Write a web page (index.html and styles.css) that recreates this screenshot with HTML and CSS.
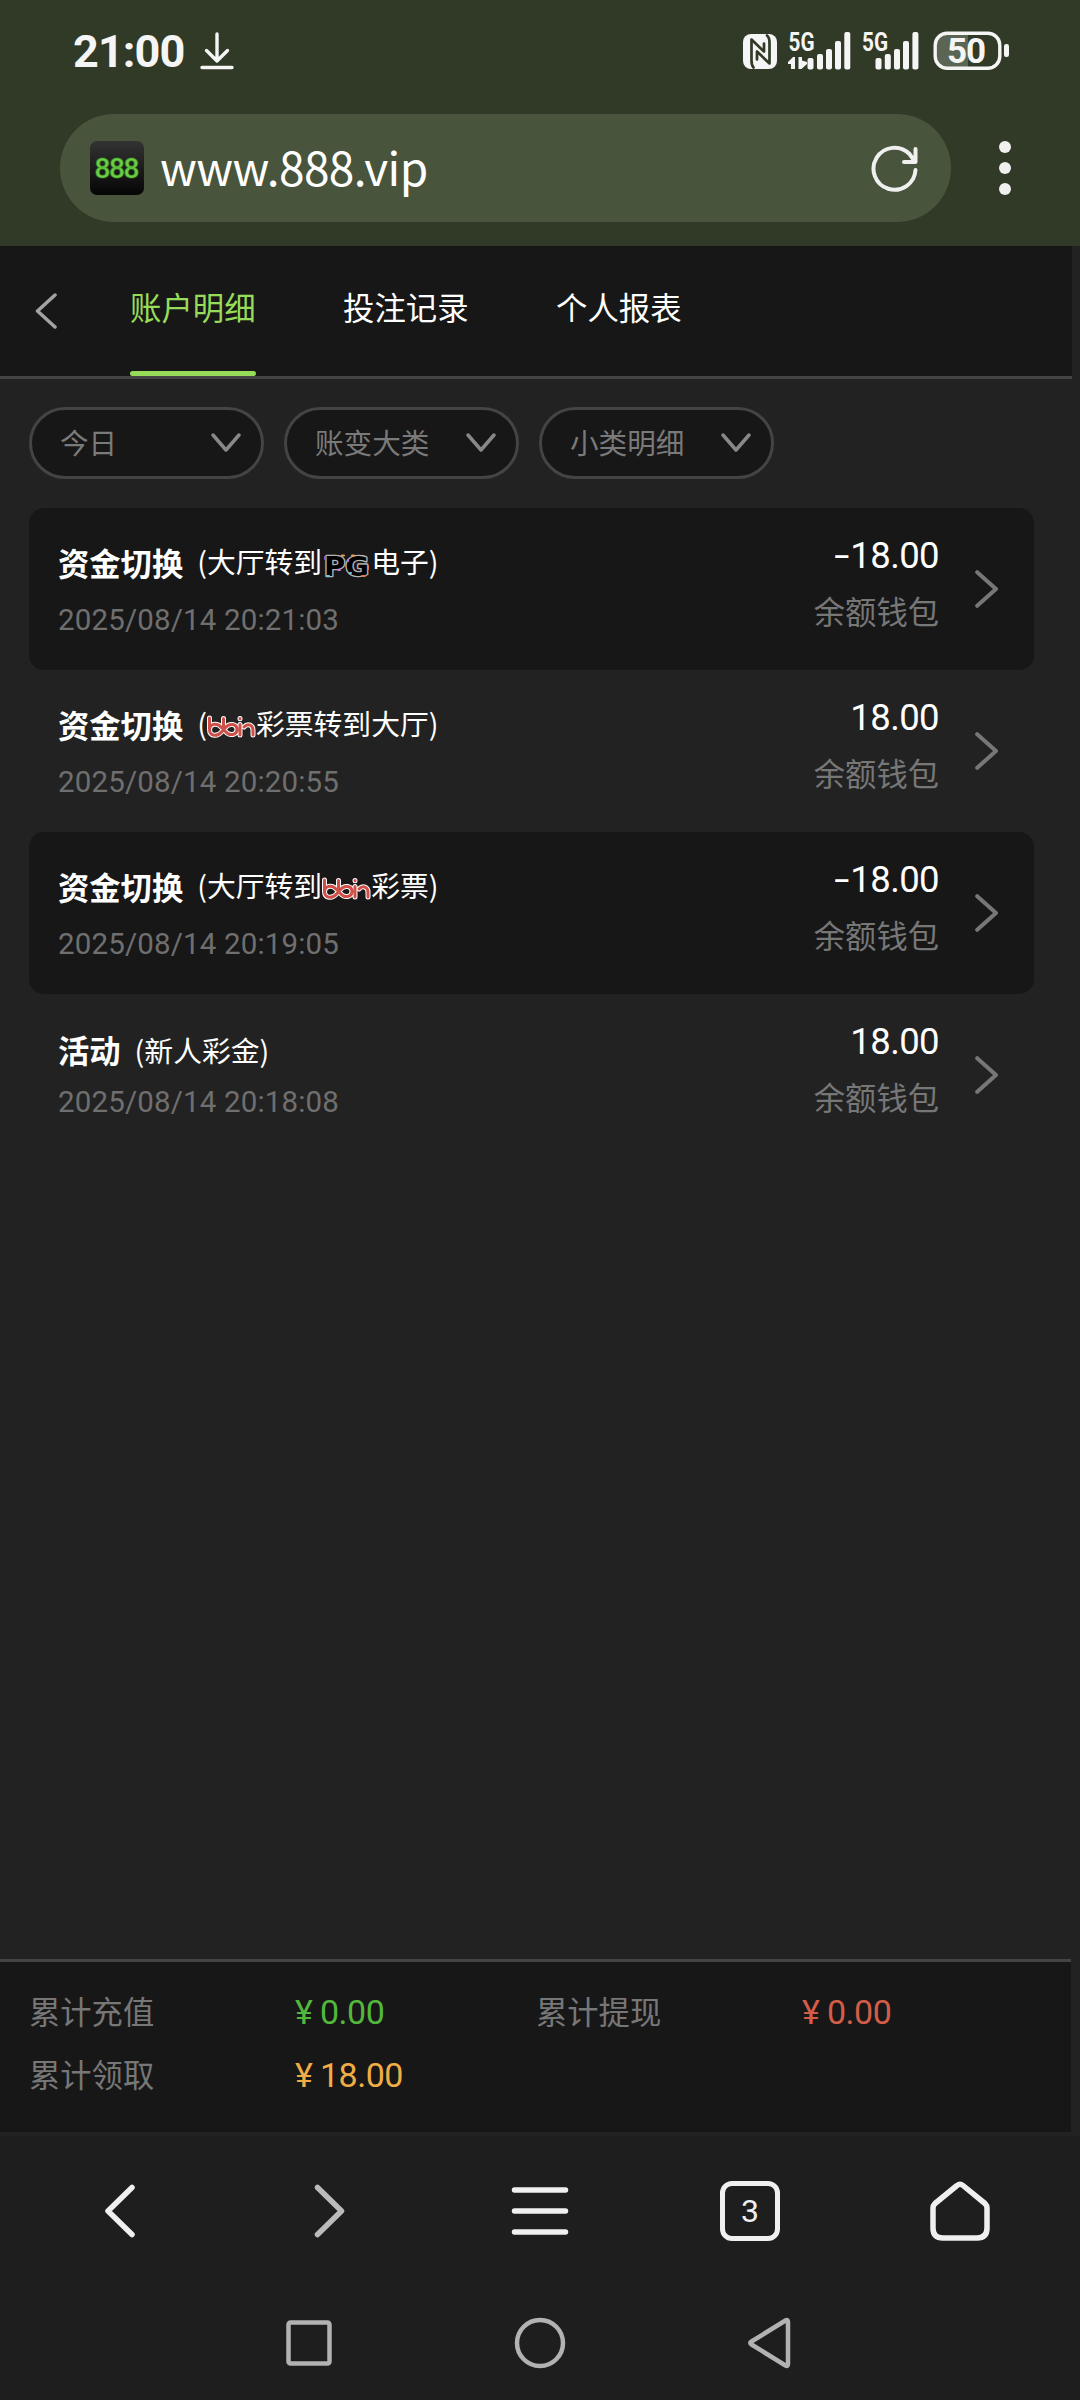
FILE: index.html
```html
<!DOCTYPE html>
<html lang="zh-CN">
<head>
<meta charset="utf-8">
<title>账户明细</title>
<link rel="stylesheet" href="styles.css">
</head>
<body>
<svg width="0" height="0" class="defs">
  <defs>
    <symbol id="right" viewBox="0 0 24 38"><path d="M2.2 2.2 21 19 2.2 35.8"/></symbol>
    <symbol id="down" viewBox="0 0 30 20"><path d="M2 2 15 17 28 2"/></symbol>
    <symbol id="bbn" viewBox="0 0 49 24">
      <path d="M2.500 4V15c0 8 8 8 12.500 2.500l3.500-4c4-5 11.500-3.500 11.500 2s-7.500 7-11.500 2l-4-4c-4-5-11-4-12 1.500M16.500 4.500V12M33 10.500V21M33 4.500v.3M37 13c4-4.500 9-1.500 9 3v5"/>
    </symbol>
  </defs>
</svg>
<header class="browser">
  <div class="status">
    <span class="clock">21:00</span>
    <svg class="download" width="34" height="38" viewBox="0 0 34 38"><path d="M17 2v27M6.500 18.500 17 29l10.500-10.500M2 35.500h30"/></svg>
    <svg class="signals" width="192" height="46" viewBox="740 26 192 46">
      <rect x="743" y="34" width="34" height="35" rx="8" fill="#f5f5f5"/>
      <path d="M753.500 67.500c-2-2-2-4-2-7V39.500l12.500 12v-8M767 35.500c2.500 2 2.500 4 2.500 7V63.500l-12.500-12v8" fill="none" stroke="#303a26" stroke-width="2.700"/>
      <text x="788.500" y="50.500" class="g5" textLength="26" lengthAdjust="spacingAndGlyphs">5G</text>
      <text x="862" y="50.500" class="g5" textLength="26" lengthAdjust="spacingAndGlyphs">5G</text>
      <path d="M795 57v12h-4v-5h-3v-2l5-5zM798.500 69V57h3.500v3.500l5 1.500v2l-5.500 5z" fill="#f5f5f5"/>
      <g fill="#f5f5f5">
        <rect x="807.500" y="58" width="6" height="11.500" rx="2"/><rect x="817" y="54" width="6" height="15.500" rx="2"/><rect x="826" y="49" width="6" height="20.500" rx="2"/><rect x="835" y="41" width="6" height="28.500" rx="2"/><rect x="844.300" y="32" width="6" height="37.500" rx="2"/>
        <rect x="875.500" y="58" width="6" height="11.500" rx="2"/><rect x="884.800" y="54" width="6" height="15.500" rx="2"/><rect x="894" y="49" width="6" height="20.500" rx="2"/><rect x="903" y="41" width="6" height="28.500" rx="2"/><rect x="912.400" y="32" width="6" height="37.500" rx="2"/>
      </g>
    </svg>
    <svg class="battery" width="78" height="42" viewBox="932 30 78 42">
      <path d="M968 34v33h-20a11 11 0 0 1-11-11V45a11 11 0 0 1 11-11z" fill="#5a6553"/>
      <rect x="935.200" y="33.200" width="64.600" height="35" rx="12" fill="none" stroke="#f5f5f5" stroke-width="3.400"/>
      <rect x="1004" y="44" width="5" height="13" rx="2.200" fill="#f5f5f5"/>
      <text x="947" y="62.500" class="level" textLength="39">50</text>
    </svg>
  </div>
  <div class="address-row">
    <div class="address">
      <svg class="favicon" width="54" height="54" viewBox="0 0 54 54">
        <defs><linearGradient id="fav" x2="0" y2="1"><stop stop-color="#333"/><stop offset="1" stop-color="#050505"/></linearGradient></defs>
        <rect width="54" height="54" rx="7" fill="url(#fav)"/>
        <text x="4.500" y="37" textLength="45" class="favtext">888</text>
      </svg>
      <span class="url">www.888.vip</span>
      <svg class="reload" width="48" height="48" viewBox="0 0 48 48"><path d="M44.500 26A21 21 0 1 1 38.500 10l5 7M44.500 5v13H33"/></svg>
    </div>
    <svg width="12" height="56" viewBox="0 0 12 56" class="more"><circle cx="6" cy="7" r="6"/><circle cx="6" cy="28" r="6"/><circle cx="6" cy="49" r="6"/></svg>
  </div>
</header>

<main class="page">
  <nav class="tabs">
    <svg class="back" width="22" height="36" viewBox="0 0 22 36"><path d="M20 2 2.500 18 20 34"/></svg>
    <a class="tab active">账户明细</a>
    <a class="tab">投注记录</a>
    <a class="tab">个人报表</a>
  </nav>
  <div class="filters">
    <div class="filter"><span>今日</span><svg width="30" height="20"><use href="#down"/></svg></div>
    <div class="filter"><span>账变大类</span><svg width="30" height="20"><use href="#down"/></svg></div>
    <div class="filter"><span>小类明细</span><svg width="30" height="20"><use href="#down"/></svg></div>
  </div>
  <section class="list">
    <article class="row shaded">
      <div class="info">
        <div class="title"><b>资金切换</b><span class="note">(大厅转到<svg class="brand" width="49" height="24" viewBox="0 0 49 24"><text x="2" y="23.500" class="pg" textLength="45" lengthAdjust="spacingAndGlyphs">PG</text><path d="M3 5v2" stroke="#7868e8"/><path d="M20 3.500h2M30 3.500h2" stroke="#ed9c5b"/><path d="M16 18h2M26 8v1" stroke="#d476df"/><path d="M5 24h2M28 21h1" stroke="#68cfe5"/><path d="M46 14v3M40 24h3" stroke="#e3794d"/></svg>电子)</span></div>
        <time>2025/08/14 20:21:03</time>
      </div>
      <div class="money"><span class="amount"><span class="minus">-</span>18.00</span><span class="wallet">余额钱包</span></div>
      <svg class="go" width="24" height="38"><use href="#right"/></svg>
    </article>
    <article class="row">
      <div class="info">
        <div class="title"><b>资金切换</b><span class="note">(<svg class="brand bbn" width="49" height="24"><use href="#bbn" class="outline"/><use href="#bbn" class="line"/></svg>彩票转到大厅)</span></div>
        <time>2025/08/14 20:20:55</time>
      </div>
      <div class="money"><span class="amount">18.00</span><span class="wallet">余额钱包</span></div>
      <svg class="go" width="24" height="38"><use href="#right"/></svg>
    </article>
    <article class="row shaded">
      <div class="info">
        <div class="title"><b>资金切换</b><span class="note">(大厅转到<svg class="brand bbn" width="49" height="24"><use href="#bbn" class="outline"/><use href="#bbn" class="line"/></svg>彩票)</span></div>
        <time>2025/08/14 20:19:05</time>
      </div>
      <div class="money"><span class="amount"><span class="minus">-</span>18.00</span><span class="wallet">余额钱包</span></div>
      <svg class="go" width="24" height="38"><use href="#right"/></svg>
    </article>
    <article class="row plain">
      <div class="info">
        <div class="title"><b>活动</b><span class="note">(新人彩金)</span></div>
        <time>2025/08/14 20:18:08</time>
      </div>
      <div class="money"><span class="amount">18.00</span><span class="wallet">余额钱包</span></div>
      <svg class="go" width="24" height="38"><use href="#right"/></svg>
    </article>
  </section>
  <footer class="summary">
    <span>累计充值</span><span class="sum green"><i>¥</i>0.00</span>
    <span>累计提现</span><span class="sum red"><i>¥</i>0.00</span>
    <span>累计领取</span><span class="sum orange"><i>¥</i>18.00</span>
  </footer>
</main>

<nav class="toolbar">
  <svg width="60" height="60" viewBox="0 0 60 60"><path d="M42 6.500 18 30 42 53.500"/></svg>
  <svg class="dim" width="60" height="60" viewBox="0 0 60 60"><path d="M17.500 6.500 41.500 30 17.500 53.500"/></svg>
  <svg width="60" height="60" viewBox="0 0 60 60"><path d="M4.500 9h51M4.500 30h51M4.500 51h51"/></svg>
  <span class="count">3</span>
  <svg width="60" height="60" viewBox="0 0 60 60"><path d="M27 4.500q3-2.500 6 0L55 22.500q2 2 2 4.500V47q0 10-10 10H13Q3 57 3 47V27q0-2.500 2-4.500z"/></svg>
</nav>
<nav class="system">
  <svg width="54" height="54" viewBox="0 0 54 54"><rect x="6.500" y="6.500" width="41" height="41" rx="2"/></svg>
  <svg width="54" height="54" viewBox="0 0 54 54"><circle cx="27" cy="27" r="23"/></svg>
  <svg width="54" height="54" viewBox="0 0 54 54"><path d="M41.500 4.500Q44 3 44 6V48q0 3-2.500 1.500L7.500 28.500q-2.500-1.500 0-3z"/></svg>
</nav>
</body>
</html>
```
FILE: styles.css
```css
* { box-sizing: border-box; }
body {
  margin: 0;
  width: 1080px;
  height: 2400px;
  display: flex;
  flex-direction: column;
  background: #1e1e1e;
  color: #fff;
  font-family: "Noto Sans CJK SC", sans-serif;
  overflow: hidden;
}
svg { display: block; flex: none; fill: none; stroke-linecap: round; stroke-linejoin: round; }
.defs { position: absolute; }

.browser { height: 246px; background: #303a26; }
.status { height: 114px; display: flex; padding: 30px 70px 0 73px; }
.clock { width: 127px; font: 700 45px/44px Roboto, sans-serif; letter-spacing: -0.9px; }
.clock, .status text { color: #f5f5f5; fill: #f5f5f5; }
.download { margin-top: 2px; stroke: #f5f5f5; stroke-width: 3.400px; }
.signals { margin: -4px 0 0 auto; }
.g5 { font: 700 25px Roboto, sans-serif; }
.level { font: 700 35px Roboto, sans-serif; }
.address-row { display: flex; align-items: center; padding-left: 60px; }
.address { width: 891px; height: 108px; border-radius: 54px; background: #48543b; display: flex; align-items: center; padding: 0 32px 0 30px; }
.url { margin: -4px 0 0 16px; font-size: 46px; line-height: 60px; letter-spacing: -0.6px; }
.reload { margin-left: auto; stroke: #f0f0f0; stroke-width: 4px; }
.more { margin-left: 48px; fill: #f0f0f0; }
.favtext { font: 500 28px Roboto, sans-serif; fill: #6fd048; stroke: rgba(60, 160, 35, .4); stroke-width: 1.500px; }

.page { height: 1890px; display: flex; flex-direction: column; background: #222; }
.tabs { width: 1072px; height: 133px; display: flex; align-items: stretch; background: #171717; border-bottom: 3px solid #444; padding-left: 35px; }
.back { margin: 47px 73px 0 0; stroke: #a3a3a3; stroke-width: 3.500px; }
.tab { width: 126px; margin-right: 87px; font-size: 31.400px; line-height: 122px; white-space: nowrap; position: relative; }
.active { color: #97dc59; }
.active::after { content: ""; position: absolute; left: 0; bottom: 0; width: 126px; height: 5px; border-radius: 2.500px; background: #97dc59; }
.filters { display: flex; gap: 20px; padding: 28px 29px 29px; }
.filter { width: 235px; height: 72px; border: 3px solid #444; border-radius: 36px; background: #171717; color: #7a7a7a; font-size: 28.600px; line-height: 62px; display: flex; justify-content: space-between; align-items: center; padding: 0 20px 0 28px; }
.filter span { margin-top: -2px; }
.filter svg { stroke: #888; stroke-width: 3.500px; }
.list { width: 1005px; margin-left: 29px; }
.row { height: 162px; border-radius: 15px; display: flex; padding: 0 35px 0 29px; }
.shaded { background: #171717; }
.title { display: flex; height: 46px; margin-top: 32px; }
.title b { font-size: 31.300px; line-height: 46px; }
.note { display: flex; margin-left: 14px; font-size: 28.800px; line-height: 41px; white-space: pre; }
.brand { margin-top: 12px; overflow: visible; }
.pg { font: 700 27px "DejaVu Sans", sans-serif; fill: #000; stroke: #b5b5b5; stroke-width: 2.600px; paint-order: stroke; }
.brand path { stroke-width: 2px; }
.bbn .outline { stroke: #fff; stroke-width: 5px; }
.bbn .line { stroke: #cf5048; stroke-width: 3px; }
#bbn path { stroke-width: inherit; }
time { display: block; margin-top: 16px; color: #6f6f6f; font: 29.500px/36px Roboto, sans-serif; letter-spacing: 0.15px; }
.money { margin-left: auto; margin-right: 36px; display: flex; flex-direction: column; align-items: flex-end; }
.amount { font: 36.500px/44px Roboto, sans-serif; margin-top: 26px; letter-spacing: -0.6px; }
.minus { display: inline-block; transform: scaleX(1.5); transform-origin: 100% 50%; margin-right: 2px; }
.wallet { font-size: 31.300px; line-height: 46px; margin-top: 10px; color: #777; }
.go { margin-top: 62px; stroke: #777; stroke-width: 4px; }
.plain .title { margin-top: 33px; }
.plain .note { line-height: 46px; }
.plain time { margin-top: 11px; }
.summary { width: 1071px; height: 173px; margin-top: auto; margin-bottom: 4px; background: #171717; border-top: 3px solid #444; padding: 19px 0 0 29px; display: grid; grid-template-columns: 266px 241px 266px 1fr; grid-template-rows: 63px 63px; font-size: 31.300px; line-height: 60px; color: #777; }
.sum { font: 34px/63px Roboto, sans-serif; display: flex; letter-spacing: -0.5px; }
.sum i { font-style: normal; width: 25px; font-size: 34px; }
.green { color: #52b83c; }
.red { color: #d35d49; }
.orange { color: #f0ad45; }

.toolbar { height: 150px; display: flex; justify-content: space-between; padding: 45px 90px 0; }
.toolbar svg { stroke: #f0f0f0; stroke-width: 5.500px; }
.toolbar .dim { stroke: #bbb; }
.count { width: 60px; height: 60px; border: 5.500px solid #f0f0f0; border-radius: 12px; font: 32px/50px Roboto, sans-serif; text-align: center; color: #f0f0f0; }
.system { display: flex; justify-content: center; gap: 177px; padding-top: 30px; }
.system svg { stroke: #b2b2b2; stroke-width: 4.500px; }
```
